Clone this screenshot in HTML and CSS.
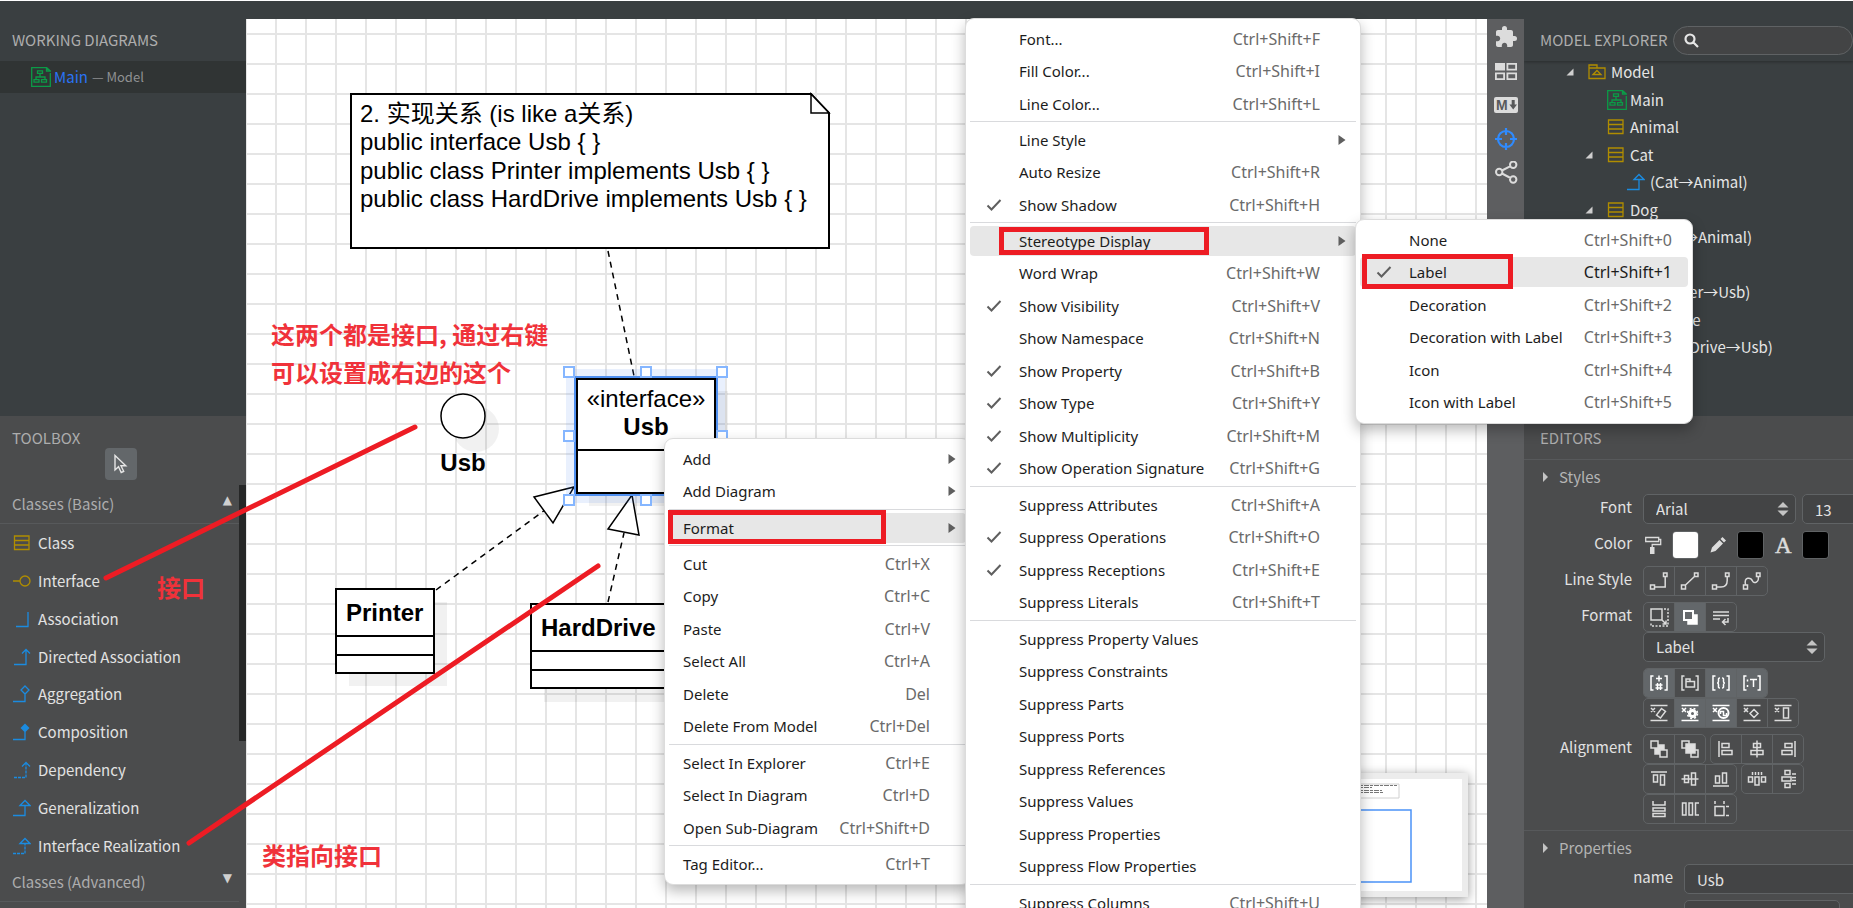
FILE: index.html
```html
<!DOCTYPE html>
<html lang="en">
<head>
<meta charset="utf-8">
<title>Main — Model</title>
<link rel="stylesheet" href="styles.css">
</head>
<body>
<svg class="sprite" aria-hidden="true">
  <symbol id="i-diagram" viewBox="0 0 20 20"><path d="M.7 0v19.3H19.3V6M15.500.5H.7M15.500.5V4h3.800zM6.500 3.800h5v2.500h-5zM9 6.500v3.500M5 12.500V10h9v2.500M3 12.700h5v2.500H3zM10.500 12.700h5v2.500h-5z" fill="none" stroke="#0b9b47" stroke-width="1.300"/></symbol>
  <symbol id="i-class" viewBox="0 0 18 18"><path d="M1.500 2h14.500v13.500h-14.500zM1.500 6.500h14.500M1.500 11h14.500" fill="none" stroke="#b08d00" stroke-width="1.300"/></symbol>
  <symbol id="i-package" viewBox="0 0 18 18"><path d="M1 15.500V2h8v3H17v10.500zM1 5h8M5 11.500l4-4 4 4z" fill="none" stroke="#b08d00" stroke-width="1.300"/></symbol>
  <symbol id="i-interface" viewBox="0 0 18 18"><path d="M0 9h7M7 9a5 5 0 1 0 10 0a5 5 0 1 0-10 0" fill="none" stroke="#b08d00" stroke-width="1.300"/></symbol>
  <symbol id="i-assoc" viewBox="0 0 18 18"><path d="M3 16.500h12V2" fill="none" stroke="#1b8be0" stroke-width="1.300"/></symbol>
  <symbol id="i-directed" viewBox="0 0 18 18"><path d="M1 16.500h12V1.500M9 5.500l4-4 4 4" fill="none" stroke="#1b8be0" stroke-width="1.300"/></symbol>
  <symbol id="i-aggr" viewBox="0 0 18 18"><path d="M0 16.500h12V9M12 1l4 4-4 4-4-4z" fill="none" stroke="#1b8be0" stroke-width="1.300"/></symbol>
  <symbol id="i-comp" viewBox="0 0 18 18"><path d="M0 16.500h12V9" fill="none" stroke="#1b8be0" stroke-width="1.300"/><path d="M12 .5l4.500 4.500-4.500 4.500-4.500-4.500z" fill="#1b8be0"/></symbol>
  <symbol id="i-dep" viewBox="0 0 18 18"><path d="M1 16.500h12V2" fill="none" stroke="#1b8be0" stroke-width="1.300" stroke-dasharray="3 1"/><path d="M9 5.500l4-4 4 4" fill="none" stroke="#1b8be0" stroke-width="1.300"/></symbol>
  <symbol id="i-gen" viewBox="0 0 18 18"><path d="M0 16.500h12V6.500M7 6.500l5-5 5 5z" fill="none" stroke="#1b8be0" stroke-width="1.300"/></symbol>
  <symbol id="i-real" viewBox="0 0 18 18"><path d="M0 16.500h12V7" fill="none" stroke="#1b8be0" stroke-width="1.300" stroke-dasharray="3 1"/><path d="M7 6.500l5-5 5 5z" fill="none" stroke="#1b8be0" stroke-width="1.300"/></symbol>
  <symbol id="i-check" viewBox="0 0 16 16"><path d="M1.500 8.500l4 4L14.500 3" fill="none" stroke="#5f5f5f" stroke-width="2"/></symbol>
  <symbol id="i-more" viewBox="0 0 8 10"><path d="M.5 0L7.500 5L.5 10z" fill="#5f5f5f"/></symbol>
  <symbol id="i-updown" viewBox="0 0 12 16"><path d="M6 1l5.500 5.500H.5zM6 15L.5 9.500h11z" fill="#c4c4c4"/></symbol>
  <symbol id="i-open" viewBox="0 0 8 8"><path d="M7.500 .5v7H.5z" fill="#cfcfcf"/></symbol>
</svg>

<header class="topbar"></header>
<div class="app">
  <aside class="side">
    <section class="panel-top">
      <h2 class="heading">WORKING DIAGRAMS</h2>
      <a class="working" href="#main"><svg class="ic20"><use href="#i-diagram"/></svg><b>Main</b><span>— Model</span></a>
    </section>
    <section class="toolbox">
      <h2 class="heading toolbox-title">TOOLBOX</h2>
      <div class="tool-scroll">
        <button class="pointer" aria-label="Select"><svg width="16" height="20" viewBox="0 0 16 20"><path d="M2 1.500v14.500l3.500-3.300 2.700 5.800 2.500-1.200-2.700-5.500h4.800z" fill="none" stroke="#e6e6e6" stroke-width="1.400"/></svg></button>
        <h3 class="group-head">Classes (Basic)<span>▲</span></h3>
        <ul class="tools">
          <li><button><svg class="ic18"><use href="#i-class"/></svg>Class</button></li>
          <li><button><svg class="ic18"><use href="#i-interface"/></svg>Interface</button></li>
          <li><button><svg class="ic18"><use href="#i-assoc"/></svg>Association</button></li>
          <li><button><svg class="ic18"><use href="#i-directed"/></svg>Directed Association</button></li>
          <li><button><svg class="ic18"><use href="#i-aggr"/></svg>Aggregation</button></li>
          <li><button><svg class="ic18"><use href="#i-comp"/></svg>Composition</button></li>
          <li><button><svg class="ic18"><use href="#i-dep"/></svg>Dependency</button></li>
          <li><button><svg class="ic18"><use href="#i-gen"/></svg>Generalization</button></li>
          <li><button><svg class="ic18"><use href="#i-real"/></svg>Interface Realization</button></li>
        </ul>
        <h3 class="group-head">Classes (Advanced)<span>▼</span></h3>
      </div>
      <div class="thumb"></div>
    </section>
  </aside>

  <main class="canvas">
    <svg class="diagram" role="img" aria-label="Class diagram">
      <g transform="translate(-246 -19)">
        <g class="shadow">
          <path d="M349 602H447V686H349zM544 617H681V702H544zM589 391H728V506H589z"/>
          <circle cx="476" cy="429" r="23"/>
        </g>
        <path class="shape" d="M351 94H811L829 113V248H351z"/>
        <path class="thin" d="M811 94V113H829z"/>
        <text class="t" x="360" y="122">2. 实现关系 (is like a关系)</text>
        <text class="t" x="360" y="150">public interface Usb { }</text>
        <text class="t" x="360" y="179">public class Printer implements Usb { }</text>
        <text class="t" x="360" y="207">public class HardDrive implements Usb { }</text>
        <path class="dash" d="M608 251L634 376M436 590L545 510M608 602L624 533"/>
        <circle class="thin" cx="463" cy="416" r="22"/>
        <text class="b" x="463" y="471" text-anchor="middle">Usb</text>
        <path class="thin" d="M534 497L574 487L553 523zM632 495L608 529L639 535z"/>
        <path class="shape" d="M577 379H715V493H577z"/>
        <path class="line" d="M577 450H715"/>
        <text class="t" x="646" y="407" text-anchor="middle">«interface»</text>
        <text class="b" x="646" y="435" text-anchor="middle">Usb</text>
        <path class="halo" d="M570 373H721V499H570z"/>
        <path class="select" d="M575 377H717V495H575z"/>
        <path class="handle" d="M564 367h10v10h-10zM641 367h10v10h-10zM717 367h10v10h-10zM564 431h10v10h-10zM717 431h10v10h-10zM564 495h10v10h-10zM641 495h10v10h-10zM717 495h10v10h-10z"/>
        <path class="shape" d="M336 589H434V673H336z"/>
        <path class="line" d="M336 636H434M336 655H434"/>
        <text class="b" x="346" y="621">Printer</text>
        <path class="shape" d="M531 604H668V688H531z"/>
        <path class="line" d="M531 651H668M531 670H668"/>
        <text class="b" x="541" y="636">HardDrive</text>
      </g>
    </svg>
    <div class="minimap">
      <svg width="100%" height="100%" viewBox="0 0 256 112">
        <path d="M140 5h53v14h-53z" fill="#fff" stroke="#d0d0d0"/>
        <path d="M144 6.500h47M144 8.500h22M144 11.500h32M144 13.500h33" stroke="#777" stroke-dasharray="3 1 5 1"/>
        <path d="M60 31h145v72H60z" fill="none" stroke="#4b93f7" stroke-width="1.500"/>
      </svg>
    </div>
  </main>

  <nav class="rail" aria-label="Panels">
    <button aria-label="Extensions"><svg width="24" height="24" viewBox="0 0 24 24"><path fill="#dcdcdc" d="M20.500 11H19V7c0-1.100-.9-2-2-2h-4V3.500a2.500 2.500 0 0 0-5 0V5H4c-1.100 0-2 .9-2 2v3.800h1.500c1.500 0 2.700 1.200 2.700 2.700s-1.200 2.700-2.700 2.700H2V20c0 1.100.9 2 2 2h3.800v-1.500c0-1.500 1.200-2.700 2.700-2.700s2.700 1.200 2.700 2.700V22H17c1.100 0 2-.9 2-2v-4h1.500a2.500 2.500 0 0 0 0-5z"/></svg></button>
    <button aria-label="Thumbnails"><svg width="24" height="24" viewBox="0 0 24 24"><path fill="#dcdcdc" d="M1 4h10v7.500H1z"/><path fill="none" stroke="#dcdcdc" stroke-width="1.800" d="M13.400 4.900h8.700v5.700h-8.700zM1.900 14.400h8.200v5.700H1.900zM13.400 14.400h8.700v5.700h-8.700z"/></svg></button>
    <button aria-label="Markdown"><svg width="26" height="24" viewBox="0 0 26 24"><rect x="1" y="4" width="24" height="16" rx="2" fill="#dcdcdc"/><text x="3" y="17" font-family="Liberation Sans" font-weight="700" font-size="14" fill="#58595b">M</text><path d="M18.700 7h3v4.500h2.300l-3.800 5-3.800-5h2.300z" fill="#58595b"/></svg></button>
    <button aria-label="Focus"><svg width="24" height="24" viewBox="0 0 24 24"><path fill="none" stroke="#2f8bff" stroke-width="2.200" d="M4 12a8 8 0 1 0 16 0a8 8 0 1 0-16 0M12 1v7M12 16v7M1 12h7M16 12h7"/></svg></button>
    <button aria-label="Share"><svg width="24" height="24" viewBox="0 0 24 24"><path fill="none" stroke="#dcdcdc" stroke-width="2" d="M2 11a3.200 3.200 0 1 0 6.400 0a3.200 3.200 0 1 0-6.400 0M16 3.800a3.200 3.200 0 1 0 6.400 0a3.200 3.200 0 1 0-6.400 0M16 18.500a3.200 3.200 0 1 0 6.400 0a3.200 3.200 0 1 0-6.400 0M8 9.500L16.500 5.200M8 12.500L16.500 17"/></svg></button>
  </nav>

  <aside class="inspector">
    <section class="explorer">
      <div class="explorer-head">
        <h2 class="heading-plain">MODEL EXPLORER</h2>
        <label class="search"><svg width="15" height="15" viewBox="0 0 15 15"><path d="M1.500 6a4.500 4.500 0 1 0 9 0a4.500 4.500 0 1 0-9 0M9.500 9.500l4.500 4.500" fill="none" stroke="#e6e6e6" stroke-width="2.200"/></svg><input type="search" aria-label="Search model"></label>
      </div>
      <ul class="tree">
        <li class="l1"><svg class="tw"><use href="#i-open"/></svg><svg class="ic18"><use href="#i-package"/></svg>Model</li>
        <li class="l2"><i class="tw"></i><svg class="ic20"><use href="#i-diagram"/></svg>Main</li>
        <li class="l2"><i class="tw"></i><svg class="ic18"><use href="#i-class"/></svg>Animal</li>
        <li class="l2"><svg class="tw"><use href="#i-open"/></svg><svg class="ic18"><use href="#i-class"/></svg>Cat</li>
        <li class="l3"><i class="tw"></i><svg class="ic18"><use href="#i-gen"/></svg>(Cat→Animal)</li>
        <li class="l2"><svg class="tw"><use href="#i-open"/></svg><svg class="ic18"><use href="#i-class"/></svg>Dog</li>
        <li class="l3"><i class="tw"></i><svg class="ic18"><use href="#i-gen"/></svg>(Dog→Animal)</li>
        <li class="l2"><svg class="tw"><use href="#i-open"/></svg><svg class="ic18"><use href="#i-class"/></svg>Printer</li>
        <li class="l3"><i class="tw"></i><svg class="ic18"><use href="#i-real"/></svg>(Printer→Usb)</li>
        <li class="l2"><svg class="tw"><use href="#i-open"/></svg><svg class="ic18"><use href="#i-class"/></svg>HardDrive</li>
        <li class="l3"><i class="tw"></i><svg class="ic18"><use href="#i-real"/></svg>(HardDrive→Usb)</li>
      </ul>
    </section>

    <section class="editors">
      <h2 class="heading editors-title">EDITORS</h2>
      <h3 class="fold"><i></i>Styles</h3>
      <div class="form">
        <div class="row"><label class="lab" for="font">Font</label>
          <div class="ctl wide"><span class="select font"><select id="font"><option>Arial</option></select><svg><use href="#i-updown"/></svg></span><input class="field size" value="13" aria-label="Font size"></div></div>
        <div class="row"><span class="lab">Color</span>
          <div class="ctl colors">
            <svg width="20" height="20" viewBox="0 0 20 20"><path d="M2.700 2.500h13v4h-13zM15.700 4.500h2v5h-8.500v3" fill="none" stroke="#dcdcdc" stroke-width="1.300"/><path d="M7 12h4.500v7H7z" fill="#dcdcdc"/></svg>
            <input type="color" value="#ffffff" aria-label="Fill color">
            <svg width="20" height="20" viewBox="0 0 20 20"><path d="M2.500 17.500l1.500-5 7.500-7.500 3.500 3.500-7.500 7.500zM12.500 4l2-2 3.500 3.500-2 2z" fill="#dcdcdc"/></svg>
            <input type="color" value="#000000" aria-label="Line color">
            <svg width="20" height="20" viewBox="0 0 20 20"><text x="2" y="18" font-family="Liberation Serif" font-size="23" fill="#dcdcdc" stroke="#dcdcdc" stroke-width=".5">A</text></svg>
            <input type="color" value="#000000" aria-label="Font color">
          </div></div>
        <div class="row"><span class="lab">Line Style</span>
          <div class="ctl"><div class="grp">
            <button aria-label="Rectilinear"><svg viewBox="0 0 20 20"><path d="M1.500 14h4v4h-4zM14.500 2h3.500v3.500h-3.500zM5.500 16h10.700V5.500"/></svg></button>
            <button aria-label="Oblique"><svg viewBox="0 0 20 20"><path d="M1.500 14h4v4h-4zM14.500 2h3.500v3.500h-3.500zM5.500 14l9-8.500"/></svg></button>
            <button aria-label="Rounded"><svg viewBox="0 0 20 20"><path d="M1.500 14h4v4h-4zM14.500 2h3.500v3.500h-3.500zM5.500 16h4.500q6.200 0 6.200-6.500v-4"/></svg></button>
            <button aria-label="Curve"><svg viewBox="0 0 20 20"><path d="M1.500 14h4v4h-4zM14.500 2h3.500v3.500h-3.500zM3.500 14C1.500 5 9 6.500 10.500 10s7 1 5.700-4.500"/></svg></button>
          </div></div></div>
        <div class="row"><span class="lab">Format</span>
          <div class="ctl"><div class="grp">
            <button aria-label="Auto resize"><svg viewBox="0 0 20 20"><path d="M2 2h11v11H2zM13 13l4 4M17 13.500V17h-3.500"/><path stroke-dasharray="2 1.500" d="M15 2h4v17H2v-4"/></svg></button>
            <button class="on" aria-label="Show shadow"><svg viewBox="0 0 20 20"><path d="M8 8h9v9H8z" fill="#fff"/><path d="M4 4h9v9H4z" fill="#66696c" stroke-width="2"/></svg></button>
            <button aria-label="Word wrap"><svg viewBox="0 0 20 20"><path d="M2 5h16M2 8.500h16M2 12h7M17 11v4h-5M14.500 12l-3 3 3 3"/></svg></button>
          </div>
          <span class="select stereo"><select aria-label="Stereotype display"><option>Label</option></select><svg><use href="#i-updown"/></svg></span></div></div>
        <div class="row"><span class="lab"></span>
          <div class="ctl"><div class="grp">
            <button class="on" aria-label="Show visibility"><svg viewBox="0 0 20 20"><path d="M4.500 3H2v14h2.500M15.500 3H18v14h-2.500M10 2.500v6M7 5.500h6M8.500 10v7M11.500 10v7M6.500 12h7M6.500 15h7"/></svg></button>
            <button aria-label="Show namespace"><svg viewBox="0 0 20 20"><path d="M4.500 3H2v14h2.500M15.500 3H18v14h-2.500M6 14V6h4v2.500h4.500V14zM6 8.500h4"/></svg></button>
            <button class="on" aria-label="Show property"><svg viewBox="0 0 20 20"><path d="M4.500 3H2v14h2.500M15.500 3H18v14h-2.500M9 5c-2 0-1.500 1-1.500 3s-.5 2-1.500 2c1 0 1.500 0 1.500 2s-.5 3 1.500 3M11 5c2 0 1.500 1 1.500 3s.5 2 1.500 2c-1 0-1.500 0-1.500 2s.5 3-1.500 3"/></svg></button>
            <button class="on" aria-label="Show type"><svg viewBox="0 0 20 20"><path d="M4.500 3H2v14h2.500M15.500 3H18v14h-2.500M5.500 6.500v2M5.500 12v2M8 6.500h7M11.500 6.500V14"/></svg></button>
          </div>
          <div class="grp">
            <button aria-label="Suppress attributes"><svg viewBox="0 0 20 20"><path d="M1.500 2.500h17M1.500 17.500h17M2 5l4 4M6 5l-4 4M12.500 5.500l4 3-5 6.500-4-3z"/></svg></button>
            <button class="on" aria-label="Suppress operations"><svg viewBox="0 0 20 20"><path d="M1.500 2.500h17M1.500 17.500h17M2 5l4 4M6 5l-4 4"/><circle cx="12.500" cy="10.500" r="3" stroke-width="3"/><circle cx="12.500" cy="10.500" r="5" stroke-dasharray="2 2"/></svg></button>
            <button class="on" aria-label="Suppress receptions"><svg viewBox="0 0 20 20"><path d="M1.500 2.500h17M1.500 17.500h17M2 5l4 4M6 5l-4 4M9.500 11V8.500h3v4h3V10"/><circle cx="12.500" cy="10" r="5" stroke-width="2"/></svg></button>
            <button aria-label="Suppress literals"><svg viewBox="0 0 20 20"><path d="M1.500 2.500h17M1.500 17.500h17M2 5l4 4M6 5l-4 4M12 6.500l4 4-4 4-4-4z"/></svg></button>
            <button aria-label="Suppress columns"><svg viewBox="0 0 20 20"><path d="M1.500 2.500h17M1.500 17.500h17M2 5l4 4M6 5l-4 4M10.500 5h5v10h-5z"/></svg></button>
          </div></div></div>
        <div class="row"><span class="lab">Alignment</span>
          <div class="ctl">
            <div class="grps"><div class="grp">
              <button aria-label="Send to back"><svg viewBox="0 0 20 20"><path d="M6 6h9v9H6z" fill="#e0e0e0"/><path d="M2 2h7v7H2zM11 11h7v7h-7z" fill="#4b4c4d"/></svg></button>
              <button aria-label="Bring to front"><svg viewBox="0 0 20 20"><path d="M2 2h7v7H2zM11 11h7v7h-7z"/><path d="M6 5h9v9H6z" fill="#e0e0e0"/></svg></button>
            </div><div class="grp">
              <button aria-label="Align left"><svg viewBox="0 0 20 20"><path d="M3 2v16M6 4.500h7v4H6zM6 11.500h10v4H6z"/></svg></button>
              <button aria-label="Align center"><svg viewBox="0 0 20 20"><path d="M10 1.500v17M6.500 4.500h7v4h-7zM4 11.500h12v4H4z" fill="#4b4c4d"/></svg></button>
              <button aria-label="Align right"><svg viewBox="0 0 20 20"><path d="M17 2v16M7 4.500h7v4H7zM4 11.500h10v4H4z"/></svg></button>
            </div></div>
            <div class="grps"><div class="grp">
              <button aria-label="Align top"><svg viewBox="0 0 20 20"><path d="M2 3h16M4.500 6h4v7h-4zM11.500 6h4v10h-4z"/></svg></button>
              <button aria-label="Align middle"><svg viewBox="0 0 20 20"><path d="M1.500 10h17M4.500 6.500h4v7h-4zM11.500 4h4v12h-4z" fill="#4b4c4d"/></svg></button>
              <button aria-label="Align bottom"><svg viewBox="0 0 20 20"><path d="M2 17h16M4.500 7h4v7h-4zM11.500 4h4v10h-4z"/></svg></button>
            </div><div class="grp">
              <button aria-label="Space horizontally"><svg viewBox="0 0 20 20"><path d="M1.500 8h4v5h-4zM8 8h4v8H8zM14.500 8h4v5h-4zM5.500 3v3M8.500 3v3M11.500 3v3M14.500 3v3"/></svg></button>
              <button aria-label="Space vertically"><svg viewBox="0 0 20 20"><path d="M7 1.500h5v4H7zM4 8h9v4H4zM7 14.500h5v4H7zM14 5h4M14 8.500h4M14 11.500h4M14 15h4"/></svg></button>
            </div></div>
            <div class="grp">
              <button aria-label="Same width"><svg viewBox="0 0 20 20"><path d="M4 9h12v3H4zM4 14.500h12v3H4zM4 2v4h12V2"/></svg></button>
              <button aria-label="Same height"><svg viewBox="0 0 20 20"><path d="M2.500 4h3.500v12H2.500zM9 4h3.500v12H9zM19 4h-3.500v12H19"/></svg></button>
              <button aria-label="Same size"><svg viewBox="0 0 20 20"><path d="M4 7.500h9v9H4zM4 2v3M13 2v3M15 7.500h3M15 16.500h3"/></svg></button>
            </div>
          </div></div>
      </div>
      <h3 class="fold props"><i></i>Properties</h3>
      <div class="form form-props">
        <div class="row"><label class="lab" for="name">name</label><input class="field name" id="name" value="Usb"></div>
        <div class="row"><span class="lab"></span><span class="select vis"><select aria-label="Visibility"><option></option></select></span></div>
      </div>
    </section>
  </aside>
</div>

<div class="menu context" role="menu">
  <ul>
    <li><button>Add<svg class="more"><use href="#i-more"/></svg></button></li>
    <li><button>Add Diagram<svg class="more"><use href="#i-more"/></svg></button></li>
  </ul>
  <ul>
    <li><button class="hover">Format<svg class="more"><use href="#i-more"/></svg></button></li>
  </ul>
  <ul>
    <li><button>Cut<kbd>Ctrl+X</kbd></button></li>
    <li><button>Copy<kbd>Ctrl+C</kbd></button></li>
    <li><button>Paste<kbd>Ctrl+V</kbd></button></li>
    <li><button>Select All<kbd>Ctrl+A</kbd></button></li>
    <li><button>Delete<kbd>Del</kbd></button></li>
    <li><button>Delete From Model<kbd>Ctrl+Del</kbd></button></li>
  </ul>
  <ul>
    <li><button>Select In Explorer<kbd>Ctrl+E</kbd></button></li>
    <li><button>Select In Diagram<kbd>Ctrl+D</kbd></button></li>
    <li><button>Open Sub-Diagram<kbd>Ctrl+Shift+D</kbd></button></li>
  </ul>
  <ul>
    <li><button>Tag Editor...<kbd>Ctrl+T</kbd></button></li>
  </ul>
</div>

<div class="menu format checks" role="menu">
  <ul>
    <li><button>Font...<kbd>Ctrl+Shift+F</kbd></button></li>
    <li><button>Fill Color...<kbd>Ctrl+Shift+I</kbd></button></li>
    <li><button>Line Color...<kbd>Ctrl+Shift+L</kbd></button></li>
  </ul>
  <ul>
    <li><button>Line Style<svg class="more"><use href="#i-more"/></svg></button></li>
    <li><button>Auto Resize<kbd>Ctrl+Shift+R</kbd></button></li>
    <li><button><svg class="check"><use href="#i-check"/></svg>Show Shadow<kbd>Ctrl+Shift+H</kbd></button></li>
  </ul>
  <ul>
    <li><button class="hover">Stereotype Display<svg class="more"><use href="#i-more"/></svg></button></li>
    <li><button>Word Wrap<kbd>Ctrl+Shift+W</kbd></button></li>
    <li><button><svg class="check"><use href="#i-check"/></svg>Show Visibility<kbd>Ctrl+Shift+V</kbd></button></li>
    <li><button>Show Namespace<kbd>Ctrl+Shift+N</kbd></button></li>
    <li><button><svg class="check"><use href="#i-check"/></svg>Show Property<kbd>Ctrl+Shift+B</kbd></button></li>
    <li><button><svg class="check"><use href="#i-check"/></svg>Show Type<kbd>Ctrl+Shift+Y</kbd></button></li>
    <li><button><svg class="check"><use href="#i-check"/></svg>Show Multiplicity<kbd>Ctrl+Shift+M</kbd></button></li>
    <li><button><svg class="check"><use href="#i-check"/></svg>Show Operation Signature<kbd>Ctrl+Shift+G</kbd></button></li>
  </ul>
  <ul>
    <li><button>Suppress Attributes<kbd>Ctrl+Shift+A</kbd></button></li>
    <li><button><svg class="check"><use href="#i-check"/></svg>Suppress Operations<kbd>Ctrl+Shift+O</kbd></button></li>
    <li><button><svg class="check"><use href="#i-check"/></svg>Suppress Receptions<kbd>Ctrl+Shift+E</kbd></button></li>
    <li><button>Suppress Literals<kbd>Ctrl+Shift+T</kbd></button></li>
  </ul>
  <ul>
    <li><button>Suppress Property Values</button></li>
    <li><button>Suppress Constraints</button></li>
    <li><button>Suppress Parts</button></li>
    <li><button>Suppress Ports</button></li>
    <li><button>Suppress References</button></li>
    <li><button>Suppress Values</button></li>
    <li><button>Suppress Properties</button></li>
    <li><button>Suppress Flow Properties</button></li>
  </ul>
  <ul>
    <li><button>Suppress Columns<kbd>Ctrl+Shift+U</kbd></button></li>
  </ul>
</div>

<div class="menu stereotype checks" role="menu">
  <ul>
    <li><button>None<kbd>Ctrl+Shift+0</kbd></button></li>
    <li><button class="hover"><svg class="check"><use href="#i-check"/></svg>Label<kbd>Ctrl+Shift+1</kbd></button></li>
    <li><button>Decoration<kbd>Ctrl+Shift+2</kbd></button></li>
    <li><button>Decoration with Label<kbd>Ctrl+Shift+3</kbd></button></li>
    <li><button>Icon<kbd>Ctrl+Shift+4</kbd></button></li>
    <li><button>Icon with Label<kbd>Ctrl+Shift+5</kbd></button></li>
  </ul>
</div>

<svg class="notes">
  <path d="M106 578L415 427M189 843L598 566"/>
  <path class="box" d="M670.500 512.500H883.500V541.500H670.500zM1001.500 229.500H1206.500V252.500H1001.500zM1364.500 256.500H1510.500V286.500H1364.500z"/>
  <text x="271" y="344">这两个都是接口, 通过右键</text>
  <text x="271" y="382">可以设置成右边的这个</text>
  <text x="157" y="597">接口</text>
  <text x="262" y="865">类指向接口</text>
</svg>
</body>
</html>
```

FILE: styles.css
```css
* { box-sizing: border-box; }
body {
  margin: 0;
  height: 100vh;
  overflow: hidden;
  position: relative;
  display: flex;
  flex-direction: column;
  background: #3a3f41;
  color: #e2e2e2;
  font: 15px/20px "Noto Sans CJK SC", sans-serif;
}
button, input, select { font: inherit; color: inherit; }
button { border: 0; padding: 0; background: none; }
ul, h2, h3 { margin: 0; padding: 0; list-style: none; font-weight: 400; font-size: 15px; }
svg { flex: none; display: block; }
.sprite { position: absolute; width: 0; height: 0; }
.ic18 { width: 18px; height: 18px; }
.ic20 { width: 20px; height: 20px; }

.topbar { height: 19px; flex: none; border-top: 1px solid #fff; }
.app {
  flex: 1;
  min-height: 0;
  display: grid;
  grid-template-columns: 246px 1fr 37px 329px;
}
.side, .inspector {
  min-height: 0;
  display: grid;
  grid-template-rows: 397px 1fr;
  overflow: hidden;
}
.side > section, .inspector > section { min-height: 0; overflow: hidden; }
.heading { padding: 11px 12px; color: #adadad; }
.heading-plain { color: #adadad; }

/* Left column */
.working {
  display: flex;
  align-items: center;
  height: 32px;
  padding-left: 31px;
  background: #303434;
  text-decoration: none;
}
.working b { margin: 0 4px 0 3px; color: #2a73f5; font-weight: 400; }
.working span { color: #8f9192; font-size: 13px; }
.toolbox { background: #4b4c4d; position: relative; }
.toolbox-title { padding: 12px 12px 0; }
.tool-scroll { padding-right: 7px; }
.pointer {
  display: grid;
  place-items: center;
  width: 32px;
  height: 32px;
  margin: 0 0 7px 105px;
  border-radius: 4px;
  background: #63676a;
}
.group-head {
  display: flex;
  justify-content: space-between;
  height: 37px;
  padding: 7px 7px 0 12px;
  border-bottom: 1px solid #57595b;
  color: #adadad;
}
.group-head span { color: #d0d0d0; font: 12px/12px "DejaVu Sans", sans-serif; }
.tools li { height: 38px; }
.tools li:nth-child(4) { height: 37px; }
.tools button {
  display: flex;
  align-items: center;
  gap: 7px;
  height: 100%;
  padding-left: 13px;
}
.thumb { position: absolute; right: 0; top: 69px; width: 7px; height: 256px; background: #262727; }

/* Canvas */
.canvas {
  position: relative;
  overflow: hidden;
  background:
    linear-gradient(to right, #e5e5e5 2px, transparent 2px) 29px 0 / 30px 30px,
    linear-gradient(to bottom, #e5e5e5 2px, transparent 2px) 0 14px / 30px 30px,
    #fff;
}
.diagram { position: absolute; inset: 0; width: 100%; height: 100%; }
.diagram .shadow { fill: #000; fill-opacity: .055; }
.diagram .shape { fill: #fff; stroke: #000; stroke-width: 2; }
.diagram .line { stroke: #000; stroke-width: 2; }
.diagram .thin { fill: #fff; stroke: #000; stroke-width: 1.5; }
.diagram .dash { stroke: #000; stroke-width: 1.5; stroke-dasharray: 6 5; }
.diagram .halo { fill: none; stroke: #4b85f0; stroke-opacity: .12; stroke-width: 8; }
.diagram .select { fill: none; stroke: #5090f0; stroke-width: 2; }
.diagram .handle { fill: #fff; stroke: #85b6ff; stroke-width: 2; }
.diagram text { fill: #000; font: 24px "Liberation Sans", "Noto Sans CJK SC", sans-serif; }
.diagram text.b { font-weight: 700; }
.minimap {
  position: absolute;
  right: 19px;
  bottom: 11px;
  width: 268px;
  height: 124px;
  border: 6px solid #ececec;
  background: #fff;
  box-shadow: 0 2px 10px rgba(0, 0, 0, .4);
}

/* Icon rail */
.rail {
  display: flex;
  flex-direction: column;
  align-items: center;
  gap: 10px;
  padding-top: 6px;
  background: #5d5e60;
}
.rail button { height: 24px; }

/* Model explorer */
.explorer-head {
  display: flex;
  align-items: center;
  gap: 5px;
  height: 42px;
  padding-left: 16px;
  box-shadow: 0 1px 3px rgba(0, 0, 0, .3);
}
.heading-plain { white-space: nowrap; }
.search {
  flex: 1;
  display: flex;
  align-items: center;
  gap: 6px;
  height: 29px;
  padding-left: 10px;
  border: 1px solid #5f6264;
  border-radius: 15px;
  background: #434445;
}
.search input { width: 100px; border: 0; outline: 0; background: none; }
.tree { margin-top: -3px; color: #e6e6e6; }
.tree li { display: flex; align-items: center; height: 27px; }
.tree li:nth-child(odd) { height: 28px; }
.tw { width: 8px; height: 8px; margin-right: 14px; }
.tree .ic18 { margin-right: 5px; }
.tree .ic20 { margin: 0 3px 0 0; }
.l1 { padding-left: 42px; }
.l2 { padding-left: 61px; }
.l3 { padding-left: 81px; }

/* Editors */
.editors { background: #4b4c4d; }
.editors-title { height: 44px; padding: 12px 16px; border-bottom: 1px solid #57595b; }
.fold { display: flex; align-items: center; height: 34px; padding-left: 19px; color: #b4b4b4; }
.fold i {
  margin-right: 11px;
  border: 5px solid transparent;
  border-left-color: #c4c4c4;
  border-right-width: 0;
}
.props { margin-top: 6px; border-top: 1px solid #57595b; }
.form { display: flex; flex-direction: column; gap: 6px; }
.row { display: flex; gap: 11px; min-height: 30px; }
.lab { width: 108px; flex: none; padding-top: 3px; text-align: right; }
.form-props .lab { width: 149px; }
.ctl { display: flex; flex-direction: column; align-items: flex-start; }
.wide { flex-direction: row; gap: 6px; }
.select { position: relative; display: block; flex: none; height: 30px; }
.select.font { width: 153px; }
.select.stereo { width: 182px; }
.select.vis { width: 156px; }
.select select, .field {
  width: 100%;
  height: 30px;
  padding: 0 12px;
  appearance: none;
  border: 1px solid #606365;
  border-radius: 5px;
  background: #434445;
}
.select svg { position: absolute; right: 7px; top: 7px; width: 12px; height: 16px; }
.field.size { flex: none; width: 70px; }
.field.name { flex: none; width: 190px; }
.colors { flex-direction: row; align-items: center; gap: 9px; height: 30px; }
.colors input {
  width: 27px;
  height: 28px;
  padding: 0;
  appearance: none;
  border: 1px solid #606365;
  border-radius: 4px;
  overflow: hidden;
}
.colors input::-webkit-color-swatch-wrapper { padding: 0; }
.colors input::-webkit-color-swatch { border: 0; }
.grps { display: flex; gap: 4px; }
.grp {
  display: flex;
  height: 30px;
  border: 1px solid #606365;
  border-radius: 5px;
  overflow: hidden;
}
.grp button { width: 30px; display: grid; place-items: center; }
.grp button + button { width: 31px; border-left: 1px solid #606365; }
.grp .on { background: #63676a; }
.grp svg { width: 20px; height: 20px; fill: none; stroke: #dcdcdc; stroke-width: 1.5; }
.grp .on svg { stroke: #fff; }

/* Menus */
.menu {
  position: absolute;
  padding: 4px;
  border: 1px solid #dcdcdc;
  border-radius: 9px;
  background: #fff;
  box-shadow: 0 6px 14px rgba(0, 0, 0, .28);
  color: #1c1c1c;
  font: 15px/20px "Noto Sans", sans-serif;
}
.menu ul + ul { margin-top: 1px; padding-top: 2px; border-top: 1px solid #d9dadd; }
.menu li { height: 32px; padding: 1px 0; }
.menu li:nth-child(even) { height: 33px; }
.menu button {
  position: relative;
  display: flex;
  align-items: center;
  justify-content: space-between;
  width: 100%;
  height: 30px;
  padding: 0 36px 0 14px;
  border-radius: 4px;
  white-space: nowrap;
}
.menu kbd { color: #6a6a6a; font: inherit; font-size: 16px; }
.menu .hover { background: #e7e7e7; }
.menu .hover kbd { color: #1c1c1c; }
.menu .more { position: absolute; right: 10px; top: 10px; width: 8px; height: 10px; }
.menu .check { position: absolute; left: 16px; top: 7px; width: 16px; height: 16px; }
.checks button { padding-left: 49px; }
.context { left: 664px; top: 438px; width: 307px; }
.format { left: 965px; top: 18px; width: 396px; }
.stereotype { left: 1355px; top: 219px; width: 338px; }
.stereotype button { padding-right: 16px; }

/* Hand-drawn marks over the window */
.notes { position: absolute; inset: 0; width: 100%; height: 100%; pointer-events: none; }
.notes path { fill: none; stroke: #ed1c24; stroke-width: 5; stroke-linecap: round; }
.notes .box { stroke-linecap: butt; }
.notes text { fill: #f0323a; font: 700 24px "Noto Sans CJK SC", sans-serif; }
```
